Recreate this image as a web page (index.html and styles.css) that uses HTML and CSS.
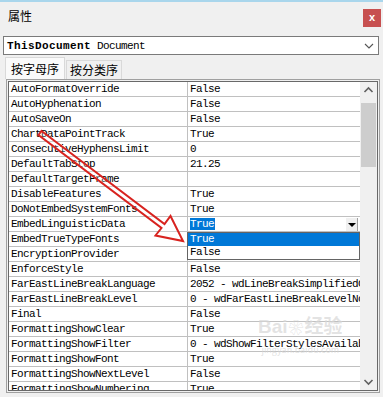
FILE: index.html
```html
<!DOCTYPE html>
<html lang="zh-CN">
<head>
    <meta charset="UTF-8" />
    <title>属性</title>
    <link rel="stylesheet" href="styles.css">
</head>
<body>
<div class="window">
    <div class="titlebar">
        <div class="title">属性</div>
        <div class="close">x</div>
    </div>

    <div class="combo">
        <span class="obj-name">ThisDocument</span>&nbsp;<span class="obj-type">Document</span>
        <svg class="chevron" width="10" height="6" viewBox="0 0 10 6"><path d="M1 1 L5 5 L9 1" fill="none" stroke="#555" stroke-width="1.1"/></svg>
    </div>

    <div class="tabs">
        <div class="tab active">按字母序</div>
        <div class="tab">按分类序</div>
    </div>

    <div class="panel">
        <div class="grid">
            <div class="rows">
                <div class="row"><div class="name">AutoFormatOverride</div><div class="value">False</div></div>
                <div class="row"><div class="name">AutoHyphenation</div><div class="value">False</div></div>
                <div class="row"><div class="name">AutoSaveOn</div><div class="value">False</div></div>
                <div class="row"><div class="name">ChartDataPointTrack</div><div class="value">True</div></div>
                <div class="row"><div class="name">ConsecutiveHyphensLimit</div><div class="value">0</div></div>
                <div class="row"><div class="name">DefaultTabStop</div><div class="value">21.25</div></div>
                <div class="row"><div class="name">DefaultTargetFrame</div><div class="value"></div></div>
                <div class="row"><div class="name">DisableFeatures</div><div class="value">True</div></div>
                <div class="row"><div class="name">DoNotEmbedSystemFonts</div><div class="value">True</div></div>
                <div class="row editing">
                    <div class="name">EmbedLinguisticData</div>
                    <div class="value">
                        <span class="sel">True</span>
                        <div class="drop-btn"><span class="tri"></span></div>
                        <div class="drop-list">
                            <div class="item hot">True</div>
                            <div class="item">False</div>
                        </div>
                    </div>
                </div>
                <div class="row"><div class="name">EmbedTrueTypeFonts</div><div class="value">True</div></div>
                <div class="row"><div class="name">EncryptionProvider</div><div class="value"></div></div>
                <div class="row"><div class="name">EnforceStyle</div><div class="value">False</div></div>
                <div class="row"><div class="name">FarEastLineBreakLanguage</div><div class="value">2052 - wdLineBreakSimplifiedChinese</div></div>
                <div class="row"><div class="name">FarEastLineBreakLevel</div><div class="value">0 - wdFarEastLineBreakLevelNormal</div></div>
                <div class="row"><div class="name">Final</div><div class="value">False</div></div>
                <div class="row"><div class="name">FormattingShowClear</div><div class="value">True</div></div>
                <div class="row"><div class="name">FormattingShowFilter</div><div class="value">0 - wdShowFilterStylesAvailable</div></div>
                <div class="row"><div class="name">FormattingShowFont</div><div class="value">True</div></div>
                <div class="row"><div class="name">FormattingShowNextLevel</div><div class="value">False</div></div>
                <div class="row"><div class="name">FormattingShowNumbering</div><div class="value">True</div></div>
            </div>
            <div class="scrollbar">
                <div class="sb-btn">
                    <svg width="17" height="17" viewBox="0 0 17 17"><path d="M4.5 10 L8.5 6 L12.5 10" fill="none" stroke="#606060" stroke-width="1.6"/></svg>
                </div>
                <div class="sb-track"><div class="sb-thumb"></div></div>
                <div class="sb-btn">
                    <svg width="17" height="17" viewBox="0 0 17 17"><path d="M4.5 7 L8.5 11 L12.5 7" fill="none" stroke="#606060" stroke-width="1.6"/></svg>
                </div>
            </div>
        </div>
    </div>

    <!-- Wasserzeichen -->
    <div class="watermark">
        <div class="wm-big">Bai<span class="wm-paw">❀</span>经验</div>
        <div class="wm-small">jingyan.baidu.com</div>
    </div>

    <!-- roter Pfeil -->
    <svg class="arrow" width="383" height="397" viewBox="0 0 383 397">
        <polygon points="41.5,130 164.5,223 170.5,215 183,240 155.5,234.5 161.5,227 38.5,134"
                 fill="rgba(255,255,255,0.25)" stroke="#d8231f" stroke-width="2" stroke-linejoin="miter"/>
    </svg>
</div>
</body>
</html>
```

FILE: styles.css
```css
body {
    margin: 0;
    background: #f0f0f0;
    font-family: 'Liberation Mono', monospace;
    color: #000;
}

.window {
    position: relative;
    width: 383px;
    height: 397px;
    box-sizing: border-box;
    border-top: 2px solid #a9d6ec;
    display: flex;
    flex-direction: column;
    overflow: hidden;
}

/* Titelleiste */
.titlebar {
    height: 34px;
    flex-shrink: 0;
    display: flex;
    justify-content: space-between;
    align-items: flex-start;
    padding-left: 8px;
    padding-right: 2px;
    font-family: 'Noto Sans CJK SC', sans-serif;
    font-size: 12px;
}

.title {
    padding-top: 6px;
    line-height: 16px;
}

.close {
    margin-top: 7px;
    width: 18px;
    height: 18px;
    background: #c75050;
    color: #fff;
    font-family: 'Liberation Sans', sans-serif;
    font-size: 11px;
    font-weight: bold;
    line-height: 17px;
    text-align: center;
}

/* Objekt-Auswahl */
.combo {
    height: 19px;
    flex-shrink: 0;
    box-sizing: border-box;
    margin: 0 4px 0 3px;
    padding-left: 3px;
    border: 1px solid #7a7a7a;
    background: #fff;
    display: flex;
    align-items: center;
    font-size: 11px;
    letter-spacing: -0.6px;
    white-space: pre;
}

.obj-name {
    font-weight: bold;
    letter-spacing: 0.4px;
}

.chevron {
    margin-left: auto;
    margin-right: 4px;
}

/* Reiter */
.tabs {
    height: 22px;
    flex-shrink: 0;
    margin-top: 2px;
    padding-left: 5px;
    display: flex;
    align-items: flex-end;
    gap: 1px;
    font-family: 'Noto Sans CJK SC', sans-serif;
    font-size: 12px;
}

.tab {
    box-sizing: border-box;
    height: 19px;
    width: 56px;
    border: 1px solid #d9d9d9;
    border-bottom: none;
    background: #f0f0f0;
    text-align: center;
    line-height: 18px;
}

.tab.active {
    height: 22px;
    width: 60px;
    background: #fafafa;
    line-height: 21px;
}

/* Eigenschaftenliste */
.panel {
    flex: 1;
    display: flex;
    margin: 0 3px 4px 6px;
    border: 1px solid #a0a0a0;
    padding: 1px;
    min-height: 0;
}

.grid {
    flex: 1;
    display: flex;
    border: 1px solid #696969;
    background: #fff;
    overflow: hidden;
}

.rows {
    width: 351px;
    flex-shrink: 0;
}

.row {
    display: flex;
    height: 15px;
    box-sizing: border-box;
    border-bottom: 1px solid #c0c0c0;
    font-size: 11px;
    line-height: 14px;
    letter-spacing: -0.6px;
}

.name {
    width: 179px;
    flex-shrink: 0;
    box-sizing: border-box;
    border-right: 1px solid #c0c0c0;
    padding-left: 2px;
    white-space: nowrap;
    overflow: hidden;
}

.value {
    flex: 1;
    padding-left: 2px;
    position: relative;
    white-space: nowrap;
    overflow: hidden;
}

.row.editing .value {
    overflow: visible;
}

.sel {
    background: #0078d7;
    color: #fff;
    padding-right: 1px;
}

.drop-btn {
    position: absolute;
    top: 1px;
    right: 2px;
    width: 12px;
    height: 13px;
    box-sizing: border-box;
    background: #f0f0f0;
    border-right: 1px solid #a0a0a0;
    display: flex;
    justify-content: center;
    align-items: center;
}

.tri {
    width: 0;
    height: 0;
    border-left: 4px solid transparent;
    border-right: 4px solid transparent;
    border-top: 4px solid #000;
}

.drop-list {
    position: absolute;
    top: 15px;
    left: -1px;
    right: 0;
    z-index: 2;
    background: #fff;
    border: 1px solid #646464;
}

.item {
    height: 13px;
    line-height: 13px;
    padding-left: 2px;
}

.item.hot {
    background: #0078d7;
    color: #fff;
}

/* Bildlaufleiste */
.scrollbar {
    width: 17px;
    flex-shrink: 0;
    background: #f0f0f0;
    display: flex;
    flex-direction: column;
}

.sb-btn {
    height: 17px;
    flex-shrink: 0;
}

.sb-btn svg {
    display: block;
}

.sb-track {
    flex: 1;
    padding: 4px 1px 0 1px;
}

.sb-thumb {
    height: 64px;
    background: #cdcdcd;
}

/* Overlays */
.arrow {
    position: absolute;
    top: -1px;
    left: 0;
    pointer-events: none;
}

.watermark {
    position: absolute;
    left: 258px;
    top: 314px;
    color: rgba(215, 215, 215, 0.7);
    font-family: 'Noto Sans CJK SC', sans-serif;
    pointer-events: none;
    text-align: center;
}

.wm-big {
    font-family: 'Liberation Sans', 'Noto Sans CJK SC', sans-serif;
    font-size: 19px;
    font-weight: bold;
    line-height: 22px;
}

.wm-paw {
    font-size: 15px;
    margin: 0 1px;
}

.wm-small {
    font-size: 9px;
    line-height: 12px;
    margin-top: 5px;
}
```
